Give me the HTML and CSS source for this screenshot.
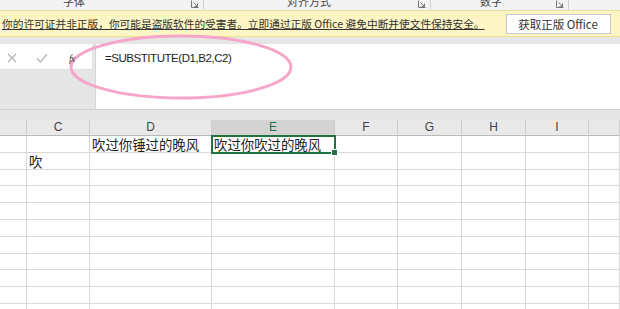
FILE: index.html
```html
<!DOCTYPE html>
<html lang="zh-CN">
<head>
  <meta charset="UTF-8" />
  <title>Excel - SUBSTITUTE</title>
  <link rel="stylesheet" href="styles.css">
</head>
<body>
  <div class="ribbon-labels">
    <div class="group group-font">
      <span class="group-name">字体</span>
      <svg class="launcher" width="8" height="8" viewBox="0 0 8 8"><path d="M0.5 0.5 V7.5 H7.5" fill="none" stroke="#777"/><path d="M2.5 2.5 L6.5 6.5 M6.5 3.5 V6.5 H3.5" fill="none" stroke="#777"/></svg>
    </div>
    <div class="group group-align">
      <span class="group-name">对齐方式</span>
      <svg class="launcher" width="8" height="8" viewBox="0 0 8 8"><path d="M0.5 0.5 V7.5 H7.5" fill="none" stroke="#777"/><path d="M2.5 2.5 L6.5 6.5 M6.5 3.5 V6.5 H3.5" fill="none" stroke="#777"/></svg>
    </div>
    <div class="group group-number">
      <span class="group-name">数字</span>
      <svg class="launcher" width="8" height="8" viewBox="0 0 8 8"><path d="M0.5 0.5 V7.5 H7.5" fill="none" stroke="#777"/><path d="M2.5 2.5 L6.5 6.5 M6.5 3.5 V6.5 H3.5" fill="none" stroke="#777"/></svg>
    </div>
  </div>

  <div class="notice">
    <span class="notice-text">你的许可证并非正版，你可能是盗版软件的受害者。立即通过正版 Office 避免中断并使文件保持安全。</span>
    <button class="notice-btn">获取正版 Office</button>
    <button class="notice-btn notice-btn-cut"></button>
  </div>

  <div class="formula-row">
    <div class="formula-tools">
      <div class="tool-buttons">
        <svg class="tool" width="10" height="10" viewBox="0 0 10 10"><path d="M1 1 L9 9 M9 1 L1 9" stroke="#b4b4b4" stroke-width="1.2"/></svg>
        <svg class="tool" width="12" height="10" viewBox="0 0 12 10"><path d="M1 5.5 L4.5 9 L11 1" fill="none" stroke="#b4b4b4" stroke-width="1.2"/></svg>
        <span class="fx">fx</span>
      </div>
    </div>
    <div class="formula-box">=SUBSTITUTE(D1,B2,C2)</div>
    <!-- hand-drawn pink mark around the formula -->
    <svg class="annotation" width="240" height="76" viewBox="0 0 240 76">
      <ellipse cx="119" cy="38" rx="110" ry="31" fill="none" stroke="#f6a6c9" stroke-width="3"/>
    </svg>
  </div>

  <div class="sheet" id="sheet">
    <div class="head"></div>
    <div class="head">C</div>
    <div class="head">D</div>
    <div class="head head-active">E</div>
    <div class="head">F</div>
    <div class="head">G</div>
    <div class="head">H</div>
    <div class="head">I</div>
    <div class="head"></div>

    <div class="cell"></div>
    <div class="cell"></div>
    <div class="cell">吹过你锤过的晚风</div>
    <div class="cell cell-active">吹过你吹过的晚风</div>
    <div class="cell"></div>
    <div class="cell"></div>
    <div class="cell"></div>
    <div class="cell"></div>
    <div class="cell"></div>

    <div class="cell"></div>
    <div class="cell">吹</div>
    <div class="cell"></div>
    <div class="cell"></div>
    <div class="cell"></div>
    <div class="cell"></div>
    <div class="cell"></div>
    <div class="cell"></div>
    <div class="cell"></div>
  </div>

  <script>
    // fill the rest of the sheet with empty rows
    const sheet = document.getElementById('sheet');
    for (let r = 0; r < 9; r++) {
      for (let c = 0; c < 9; c++) {
        const cell = document.createElement('div');
        cell.className = 'cell';
        sheet.appendChild(cell);
      }
    }
  </script>
</body>
</html>
```

FILE: styles.css
```css
body {
  margin: 0;
  width: 620px;
  height: 309px;
  overflow: hidden;
  display: flex;
  flex-direction: column;
  background: #e6e6e6;
  font-family: "Liberation Sans", "Noto Sans CJK SC", sans-serif;
  color: #222;
}

/* Ribbon group names, cut off at the top */
.ribbon-labels {
  display: flex;
  flex-shrink: 0;
  height: 10px;
  overflow: hidden;
  background: #f3f3f3;
}

.group {
  position: relative;
  display: flex;
  box-sizing: border-box;
  border-right: 1px solid #d2d2d2;
  height: 10px;
}

.group-font { width: 204px; }
.group-align { width: 227px; }
.group-number { width: 138px; }

.group-name {
  font-family: "Noto Sans CJK SC", sans-serif;
  font-size: 11px;
  line-height: 12px;
  margin-top: -5px;
  color: #444;
  white-space: nowrap;
}

.group-font .group-name { margin-left: 63px; }
.group-align .group-name { margin-left: 83px; }
.group-number .group-name { margin-left: 49px; }

.launcher {
  margin-left: auto;
  margin-right: 4px;
}

/* Licence warning bar */
.notice {
  display: flex;
  flex-shrink: 0;
  align-items: center;
  height: 27px;
  box-sizing: border-box;
  background: #fdf5c3;
  border-top: 1px solid #eadf9c;
  border-bottom: 1px solid #f0e28c;
  padding-left: 2px;
}

.notice-text {
  font-family: "Noto Sans CJK SC", sans-serif;
  font-size: 10.7px;
  color: #333;
  text-decoration: underline;
  white-space: nowrap;
}

.notice-btn {
  margin-left: 21px;
  width: 105px;
  height: 20px;
  padding: 0;
  background: #fff;
  border: 1px solid #c8c8c8;
  font-family: "Noto Sans CJK SC", sans-serif;
  font-size: 11.5px;
  color: #333;
  flex-shrink: 0;
}

.notice-btn-cut {
  margin-left: 9px;
  width: 30px;
}

/* Formula bar */
.formula-row {
  position: relative;
  display: flex;
  flex-shrink: 0;
  margin-top: 7px;
  height: 65px;
  border-bottom: 1px solid #cfcfcf;
}

.formula-tools {
  width: 92px;
}

.tool-buttons {
  display: flex;
  align-items: center;
  height: 26px;
  background: #fff;
  border-bottom: 1px solid #e0e0e0;
  box-sizing: border-box;
  padding-left: 7px;
}

.tool {
  margin-top: 2px;
}

.tool + .tool {
  margin-left: 19px;
}

.fx {
  position: relative;
  z-index: 2;
  margin-left: 21px;
  margin-top: 4px;
  font-family: "Liberation Serif", serif;
  font-style: italic;
  font-size: 10px;
  letter-spacing: -1px;
  color: #444;
}

.formula-box {
  flex: 1;
  margin-left: 3px;
  background: #fff;
  border-left: 1px solid #d6d6d6;
  padding: 8px 0 0 9px;
  font-size: 11.5px;
  letter-spacing: -0.45px;
  color: #222;
}

.annotation {
  position: absolute;
  left: 62px;
  top: -15px;
}

/* Worksheet */
.sheet {
  flex: 1;
  min-height: 0;
  overflow: hidden;
  display: grid;
  grid-template-columns: 27px 63px 122px 123px 63px 64px 64px 63px 31px;
  grid-template-rows: 16px;
  grid-auto-rows: 16.8px;
  align-content: start;
  margin-top: 10px;
  background: #fff;
}

.head {
  box-sizing: border-box;
  background: #e9e9e9;
  border-right: 1px solid #cdcdcd;
  border-bottom: 1px solid #b9b9b9;
  text-align: center;
  font-size: 12px;
  line-height: 15px;
  color: #444;
}

.head-active {
  background: #d3d3d3;
  color: #217346;
}

.cell {
  position: relative;
  box-sizing: border-box;
  border-right: 1px solid #d9d9d9;
  border-bottom: 1px solid #d9d9d9;
  padding-left: 2px;
  font-family: "Noto Sans CJK SC", sans-serif;
  font-size: 13.4px;
  line-height: 16px;
  white-space: nowrap;
  color: #222;
}

.cell-active {
  outline: 2px solid #217346;
  outline-offset: -1px;
  z-index: 1;
}

/* fill handle */
.cell-active::after {
  content: "";
  position: absolute;
  right: -4px;
  bottom: -4px;
  width: 5px;
  height: 5px;
  background: #217346;
  border: 1px solid #fff;
}
```
